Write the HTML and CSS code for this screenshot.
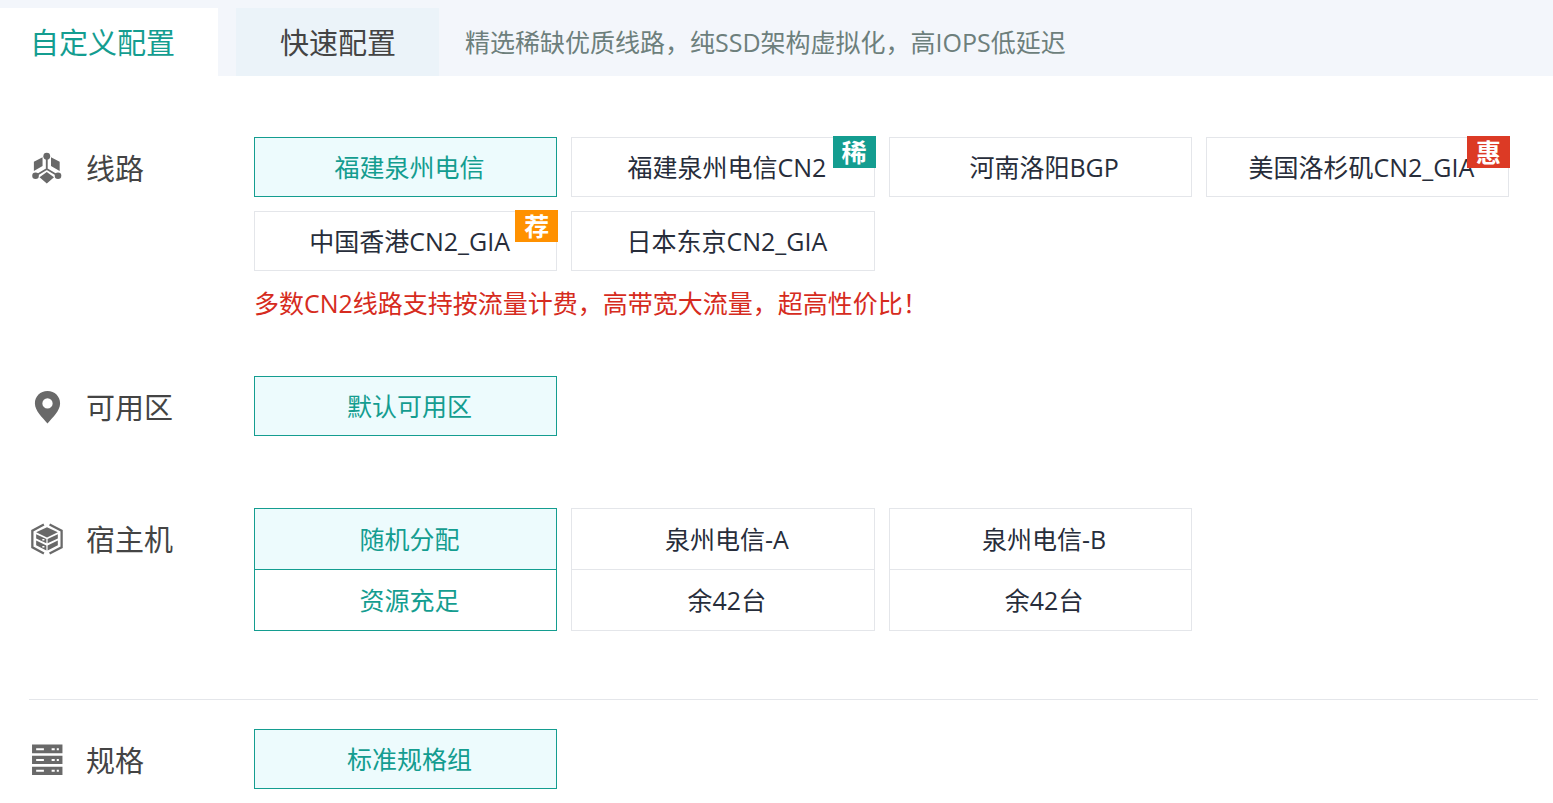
FILE: index.html
```html
<!DOCTYPE html>
<html lang="zh-CN">
<head>
<meta charset="utf-8">
<meta name="viewport" content="width=device-width, initial-scale=1">
<title>自定义配置</title>
<link rel="stylesheet" href="styles.css">
</head>
<body>
<header class="tabs">
  <button type="button" class="tab tab-active">自定义配置</button>
  <button type="button" class="tab tab-quick">快速配置</button>
  <p class="tabs-hint">精选稀缺优质线路，纯SSD架构虚拟化，高IOPS低延迟</p>
</header>
<main class="config">
  <section class="row row-line">
    <h2 class="row-title">
      <svg class="icon" viewBox="0 0 32 32" aria-hidden="true">
        <g fill="#696969">
          <path d="M2.800 9.500 11.200 5v8.500l-8.400 5zM27.800 9.500 19.400 5v8.500l8.400 5zM15.300 19.500l7 5-7 6-7-6z"/>
          <circle cx="15.300" cy="4" r="3.300"/><circle cx="4.400" cy="23" r="3.200"/><circle cx="26.200" cy="23" r="3.200"/>
        </g>
        <path d="M15.300 4v12.500M4.400 23l10.900-6.500L26.200 23" fill="none" stroke="#696969" stroke-width="1.800"/>
      </svg>
      <span class="row-label">线路</span>
    </h2>
    <div class="row-body">
      <div class="options">
        <button type="button" class="option selected">福建泉州电信</button>
        <button type="button" class="option">福建泉州电信CN2<span class="badge badge-rare">稀</span></button>
        <button type="button" class="option">河南洛阳BGP</button>
        <button type="button" class="option">美国洛杉矶CN2_GIA<span class="badge badge-deal">惠</span></button>
        <button type="button" class="option">中国香港CN2_GIA<span class="badge badge-pick">荐</span></button>
        <button type="button" class="option">日本东京CN2_GIA</button>
      </div>
      <p class="note">多数CN2线路支持按流量计费，高带宽大流量，超高性价比！</p>
    </div>
  </section>
  <section class="row row-zone">
    <h2 class="row-title">
      <svg class="icon" viewBox="0 0 32 32" aria-hidden="true">
        <path d="M16 0C9 0 3.800 5.300 3.800 12c0 7 7.200 13.500 12.200 19.500C21 25.500 28.200 19 28.200 12 28.200 5.300 23 0 16 0zm0 7a5 5 0 1 1 0 10 5 5 0 0 1 0-10z" fill="#696969" fill-rule="evenodd"/>
      </svg>
      <span class="row-label">可用区</span>
    </h2>
    <div class="row-body options">
      <button type="button" class="option selected">默认可用区</button>
    </div>
  </section>
  <section class="row row-host">
    <h2 class="row-title">
      <svg class="icon" viewBox="0 0 32 32" aria-hidden="true">
        <path d="M12.500 1.500 1.300 7.500v16l11.200 6M18 1.500l11.700 6v16L18 29.500" fill="none" stroke="#696969" stroke-width="2.200"/>
        <path d="M15.500 4 26 9l-10.500 5L5 9z" fill="#696969"/>
        <path d="M5 10.800l9.900 4.700v4.200L5 15zM5 17l9.900 4.700v5L5 21.500zM26 10.800l-9.900 4.700v4.200L26 15zM26 17l-9.900 4.700v5L26 21.500z" fill="#696969"/>
        <path d="M11 15.500h2v1.500h-2zM11 22.200h2v1.500h-2z" fill="#fff"/>
      </svg>
      <span class="row-label">宿主机</span>
    </h2>
    <div class="row-body options">
      <button type="button" class="host selected"><span class="host-name">随机分配</span><span class="host-stock">资源充足</span></button>
      <button type="button" class="host"><span class="host-name">泉州电信-A</span><span class="host-stock">余42台</span></button>
      <button type="button" class="host"><span class="host-name">泉州电信-B</span><span class="host-stock">余42台</span></button>
    </div>
  </section>
  <hr class="divider">
  <section class="row">
    <h2 class="row-title">
      <svg class="icon" viewBox="0 0 32 32" aria-hidden="true">
        <path d="M1 .500h29.500v8.500H1zM1 11.500h29.500v8H1zM1 22h29.500v8H1z" fill="#696969"/>
        <path d="M5 4h7.500v2H5zM5 14.500h7.500v2H5zM5 25h7.500v2H5zM20 4h3v2h-3zM25 4h2v2h-2zM20 14.500h3v2h-3zM25 14.500h2v2h-2zM20 25h3v2h-3zM25 25h2v2h-2z" fill="#fff"/>
      </svg>
      <span class="row-label">规格</span>
    </h2>
    <div class="row-body options">
      <button type="button" class="option selected">标准规格组</button>
    </div>
  </section>
</main>
</body>
</html>
```
FILE: styles.css
```css
* {
  box-sizing: border-box;
}

body {
  margin: 0;
  background: #fff;
  color: #272d3a;
  font-family: "Open Sans", "Noto Sans CJK SC", sans-serif;
  font-size: 25px;
  line-height: 36px;
}

button {
  font: inherit;
  color: inherit;
  cursor: pointer;
}

h2,
p {
  margin: 0;
  font-weight: 400;
}

.tabs {
  display: flex;
  align-items: stretch;
  padding-top: 8px;
  background: #f3f6fb;
}

.tab {
  height: 68px;
  border: 0;
  padding: 2px 43px 0 44px;
  font-size: 29px;
}

.tab-active {
  padding-left: 30px;
  background: #fff;
  color: #149d90;
}

.tab-quick {
  margin-left: 18px;
  background: #ebf3f9;
  color: #444;
}

.tabs-hint {
  align-self: center;
  margin-left: 26px;
  color: #6d7f7c;
}

.config {
  padding-top: 61px;
}

.row {
  display: flex;
  align-items: flex-start;
  padding: 0 44px 0 31px;
}

.row-line {
  margin-bottom: 55px;
}

.row-zone {
  margin-bottom: 70px;
}

.row-host {
  margin-bottom: 68px;
}

.row-title {
  flex: 0 0 223px;
  display: flex;
  align-items: center;
  gap: 22px;
  height: 62px;
  color: #444;
  font-size: 29px;
}

.row-label {
  padding-top: 2px;
}

.icon {
  width: 33px;
  height: 33px;
}

.row-body {
  flex: 1;
}

.options {
  display: grid;
  grid-template-columns: repeat(4, 1fr);
  gap: 14px;
}

.option,
.host {
  background: #fff;
  border: 1px solid #e4e6ea;
  padding: 0;
}

.option {
  position: relative;
  height: 60px;
  padding-left: 8px;
  white-space: nowrap;
}

.selected {
  border-color: #149d90;
  color: #149d90;
}

.option.selected,
.selected .host-name {
  background: #edfbfd;
}

.badge {
  position: absolute;
  top: -2px;
  right: -2px;
  width: 43px;
  height: 32px;
  color: #fff;
  font-weight: 700;
  line-height: 32px;
}

.badge-rare {
  background: #149d90;
}

.badge-deal {
  background: #dc3a25;
}

.badge-pick {
  background: #ff9100;
}

.note {
  margin-top: 14px;
  color: #d62b20;
}

.host-name,
.host-stock {
  display: block;
  padding-left: 8px;
  line-height: 60px;
}

.host-name {
  border-bottom: 1px solid #e4e6ea;
}

.selected .host-name {
  border-color: #149d90;
}

.divider {
  height: 1px;
  margin: 0 15px 29px 29px;
  border: 0;
  background: #e4e6ea;
}
```
